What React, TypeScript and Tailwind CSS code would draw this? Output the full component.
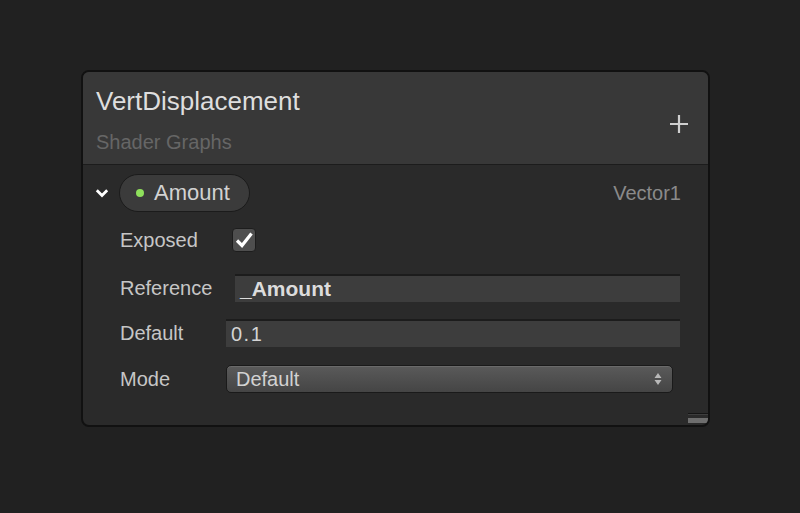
import React from "react";

const font = { fontFamily: '"Liberation Sans", Arial, sans-serif' };

export default function App() {
  return (
    <div className="w-[800px] h-[513px] bg-[#212121] pt-[70px] pl-[81px]" style={font}>
      <div className="relative w-[629px] h-[357px] rounded-[8px] border-2 border-[#111111] bg-[#2a2a2a] overflow-hidden">
        {/* Header */}
        <div className="h-[93px] bg-[#383838] border-b border-[#1c1c1c] flex items-start justify-between pl-[13px] pr-[19px]">
          <div className="pt-[14px]">
            <div className="text-[26px] leading-[30px] text-[#dedede]">VertDisplacement</div>
            <div className="mt-[14px] text-[20px] leading-[24px] text-[#666666]">Shader Graphs</div>
          </div>
          <svg width="20" height="20" viewBox="0 0 20 20" className="mt-[42px]">
            <path d="M10 1V19M1 10H19" stroke="#cfcfcf" strokeWidth="2.2" />
          </svg>
        </div>
        {/* Body */}
        <div className="pt-[9px]">
          <div className="flex items-center h-[38px] pl-[12px] pr-[27px]">
            <svg width="14" height="10" viewBox="0 0 14 10" className="mr-[10px]">
              <path d="M1.8 2.2L7 7.4L12.2 2.2" stroke="#ffffff" strokeWidth="2.8" fill="none" />
            </svg>
            <div className="flex items-center h-[38px] w-[131px] rounded-full border border-[#1b1b1b] bg-[#3b3b3b] pl-[16px]">
              <div className="w-[8px] h-[8px] rounded-full bg-[#8fe05c]" />
              <span className="ml-[10px] text-[22px] leading-none text-[#d2d2d2]">Amount</span>
            </div>
            <div className="ml-auto text-[20px] leading-none text-[#8a8a8a]">Vector1</div>
          </div>

          <div className="flex items-center h-[28px] mt-[14px] pl-[37px]">
            <span className="w-[112px] text-[20px] leading-none text-[#c6c6c6]">Exposed</span>
            <div className="w-[24px] h-[24px] rounded-[4px] bg-[#4e4e4e] border border-[#1d1d1d] flex items-center justify-center">
              <svg width="20" height="18" viewBox="0 0 20 18">
                <path d="M3 9.5L8 14.5L17.5 2.5" stroke="#ffffff" strokeWidth="3.2" fill="none" strokeLinejoin="miter" />
              </svg>
            </div>
          </div>

          <div className="flex items-center h-[28px] mt-[20px] pl-[37px] pr-[28px]">
            <span className="w-[115px] text-[20px] leading-none text-[#c6c6c6]">Reference</span>
            <div className="flex-1 h-[28px] bg-[#3d3d3d] border-t-2 border-[#1c1c1c] flex items-center pl-[5px] pb-[2px]">
              <span className="text-[21px] font-bold leading-none text-[#dcdcdc]">_Amount</span>
            </div>
          </div>

          <div className="flex items-center h-[28px] mt-[17px] pl-[37px] pr-[28px]">
            <span className="w-[106px] text-[20px] leading-none text-[#c6c6c6]">Default</span>
            <div className="flex-1 h-[28px] bg-[#3d3d3d] border-t-2 border-[#1c1c1c] flex items-center pl-[5px] pb-[1px]">
              <span className="text-[20px] leading-none tracking-[1.5px] text-[#d4d4d4]">0.1</span>
            </div>
          </div>

          <div className="flex items-center h-[28px] mt-[18px] pl-[37px] pr-[35px]">
            <span className="w-[106px] text-[20px] leading-none text-[#c6c6c6]">Mode</span>
            <div className="flex-1 h-[28px] rounded-[5px] border border-[#1a1a1a] bg-gradient-to-b from-[#5a5a5a] to-[#454545] shadow-[inset_0_1px_0_#6a6a6a] flex items-center pl-[9px] pr-[10px]">
              <span className="text-[20px] leading-none text-[#d2d2d2]">Default</span>
              <svg width="8" height="14" viewBox="0 0 8 14" className="ml-auto">
                <path d="M4 1L7.5 6H0.5Z M4 13L7.5 8H0.5Z" fill="#b8b8b8" />
              </svg>
            </div>
          </div>
        </div>
        {/* resize handle */}
        <div className="absolute right-0 bottom-0 w-[20px] h-[12px]">
          <div className="h-[2px] bg-[#3e3e3e] border-t border-[#151515]" />
          <div className="mt-[3px] h-[5px] bg-[#6e6e6e]" />
        </div>
      </div>
    </div>
  );
}
